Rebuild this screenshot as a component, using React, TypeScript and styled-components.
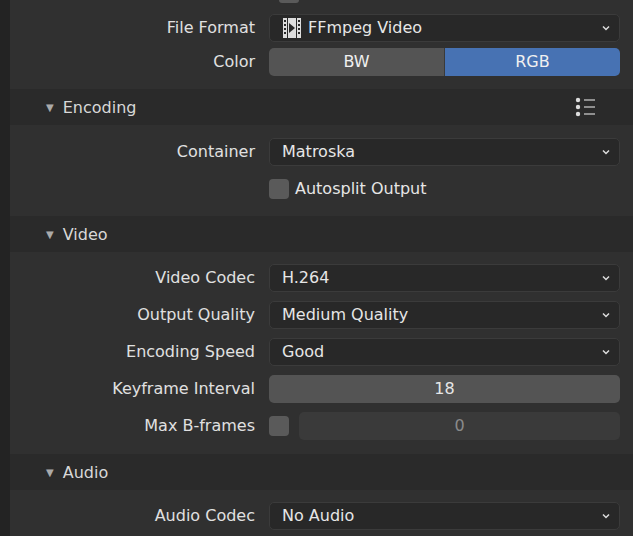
import React from "react";
import styled, { createGlobalStyle } from "styled-components";

const G = createGlobalStyle`
  body { margin:0; background:#232323; font-family:"DejaVu Sans","Noto Sans",sans-serif; color:#e6e6e6; }
`;
const Wrap = styled.div`display:flex;width:633px;height:536px;overflow:hidden;`;
const Strip = styled.div`width:10px;background:#232323;flex-shrink:0;`;
const Panel = styled.div`flex:1;background:#303030;display:flex;flex-direction:column;`;
const Row = styled.div<{ h?: number }>`
  display:grid;grid-template-columns:259px 351px;column-gap:0;align-items:center;
  height:${p => p.h ?? 37}px;font-size:16px;flex-shrink:0;
`;
const Label = styled.div`text-align:right;padding-right:14px;color:#e0e0e0;`;
const Drop = styled.div`
  height:28px;box-sizing:border-box;background:#282828;border:1px solid #3b3b3b;border-radius:5px;
  display:flex;align-items:center;padding:0 8px 0 12px;gap:6px;color:#e6e6e6;
  & > span.t{flex:1;}
`;
const Seg = styled.div`display:flex;height:28px;border-radius:5px;overflow:hidden;`;
const SegBtn = styled.div<{ on?: boolean }>`
  flex:1;display:flex;align-items:center;justify-content:center;
  background:${p => (p.on ? "#4772b3" : "#545454")};color:#f0f0f0;
  border-right:${p => (p.on ? "none" : "1px solid #3a3a3a")};
`;
const Slider = styled.div<{ dis?: boolean }>`
  flex:1;height:28px;border-radius:5px;display:flex;align-items:center;justify-content:center;
  background:${p => (p.dis ? "#3a3a3a" : "#545454")};color:${p => (p.dis ? "#8a8a8a" : "#e6e6e6")};
`;
const Box = styled.div`width:20px;height:20px;border-radius:4px;background:#5a5a5a;flex-shrink:0;`;
const Inline = styled.div`display:flex;align-items:center;gap:10px;`;
const Header = styled.div`
  height:36px;flex-shrink:0;background:#2a2a2a;display:flex;align-items:center;padding:0 36px 0 36px;
  font-size:16px;color:#d8d8d8;
  & > span.t{flex:1;margin-left:9px;}
`;
const Tri = styled.span`font-size:10px;color:#aaa;`;
const Gap = styled.div<{ h: number }>`height:${p => p.h}px;flex-shrink:0;`;
const TopBox = styled.div`margin-left:269px;width:20px;height:3px;flex-shrink:0;background:#5a5a5a;border-radius:0 0 4px 4px;`;

const Chev = () => (
  <svg width="10" height="8" viewBox="0 0 10 8"><path d="M2 2.5 L5 5.5 L8 2.5" stroke="#ddd" strokeWidth="1.5" fill="none" /></svg>
);
const Film = () => (
  <svg width="20" height="22" viewBox="0 0 20 22">
    <rect x="1" y="1" width="18" height="20" fill="#ddd" />
    {[3, 7, 11, 15].map(y => <g key={y}><rect x="2" y={y} width="2" height="2" fill="#282828" /><rect x="16" y={y} width="2" height="2" fill="#282828" /></g>)}
    <rect x="5" y="1" width="1" height="20" fill="#282828" /><rect x="14" y="1" width="1" height="20" fill="#282828" />
    <path d="M7 6 L13 11 L7 16 Z" fill="#282828" />
  </svg>
);
const ListIcon = () => (
  <svg width="22" height="20" viewBox="0 0 22 20">
    {[3, 10, 17].map(y => <g key={y}><circle cx="3" cy={y} r="2.2" fill="#ddd" /><rect x="9" y={y - 0.7} width="11" height="1.4" fill="#bbb" /></g>)}
  </svg>
);

const DropRow = ({ l, v, icon, h }: { l: string; v: string; icon?: React.ReactNode; h?: number }) => (
  <Row h={h}><Label>{l}</Label><Drop>{icon}<span className="t">{v}</span><Chev /></Drop></Row>
);

export default function App() {
  return (
    <Wrap>
      <G />
      <Strip />
      <Panel>
        <TopBox />
        <Gap h={7} />
        <DropRow h={35} l="File Format" v="FFmpeg Video" icon={<Film />} />
        <Row h={33}><Label>Color</Label><Seg><SegBtn>BW</SegBtn><SegBtn on>RGB</SegBtn></Seg></Row>
        <Gap h={11} />
        <Header><Tri>▼</Tri><span className="t">Encoding</span><ListIcon /></Header>
        <Gap h={8} />
        <DropRow l="Container" v="Matroska" />
        <Row><span /><Inline><Box /><span style={{ marginLeft: -4 }}>Autosplit Output</span></Inline></Row>
        <Gap h={9} />
        <Header><Tri>▼</Tri><span className="t">Video</span></Header>
        <Gap h={7} />
        <DropRow l="Video Codec" v="H.264" />
        <DropRow l="Output Quality" v="Medium Quality" />
        <DropRow l="Encoding Speed" v="Good" />
        <Row><Label>Keyframe Interval</Label><Slider>18</Slider></Row>
        <Row><Label>Max B-frames</Label><Inline><Box /><Slider dis>0</Slider></Inline></Row>
        <Gap h={10} />
        <Header><Tri>▼</Tri><span className="t">Audio</span></Header>
        <Gap h={7} />
        <DropRow l="Audio Codec" v="No Audio" />
      </Panel>
    </Wrap>
  );
}
